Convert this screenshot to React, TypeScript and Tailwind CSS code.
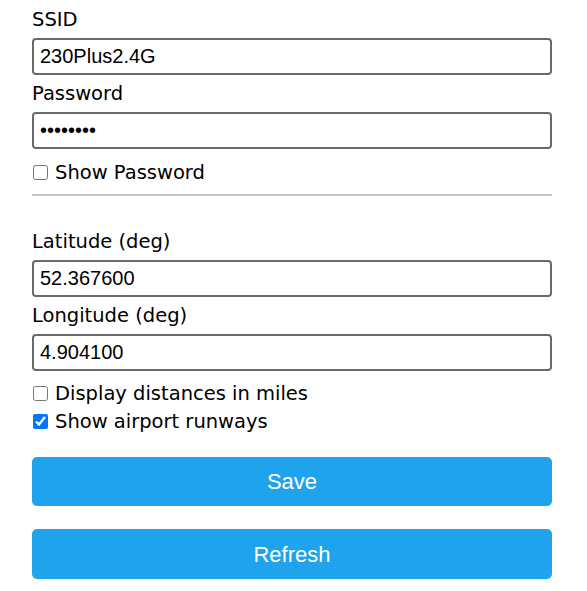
import { useState } from 'react';

const labelFont = "font-['DejaVu_Sans',Verdana,sans-serif]";

function Field({ label, value, type = 'text' }: { label: string; value: string; type?: string }) {
  return (
    <div className="flex flex-col">
      <div className={`h-[37px] flex items-center pt-[1px] text-[19.5px] text-black ${labelFont}`}>{label}</div>
      <input
        type={type}
        defaultValue={value}
        className="h-[37px] w-full rounded-[4px] border-2 border-[#6a6a6a] bg-white px-[6px] text-[20px] text-black font-['Liberation_Sans',Arial,sans-serif] outline-none"
      />
    </div>
  );
}

function Check({ label, checked }: { label: string; checked?: boolean }) {
  const [on, setOn] = useState(!!checked);
  return (
    <label className={`h-[28px] flex items-center gap-[7px] pt-[1px] text-[19.5px] text-black ${labelFont}`}>
      <input
        type="checkbox"
        checked={on}
        onChange={() => setOn(!on)}
        className="m-0 ml-[1px] h-[15px] w-[15px] accent-[#0075ff]"
      />
      {label}
    </label>
  );
}

export default function App() {
  return (
    <div className="min-h-[591px] w-[587px] bg-white pt-[1px]">
      <div className="ml-[32px] w-[520px] flex flex-col">
        <Field label="SSID" value="230Plus2.4G" />
        <Field label="Password" value="12345678" type="password" />
        <div className="mt-[9px]">
          <Check label="Show Password" />
        </div>
        <div className="mt-[8px] h-[2px] bg-[#c6c6c6]" />
        <div className="mt-[27px]">
          <Field label="Latitude (deg)" value="52.367600" />
          <Field label="Longitude (deg)" value="4.904100" />
        </div>
        <div className="mt-[8px] flex flex-col">
          <Check label="Display distances in miles" />
          <Check label="Show airport runways" checked />
        </div>
        <button className="mt-[22px] h-[49px] w-full rounded-[5px] bg-[#1fa3ec] text-[22px] text-white font-['Liberation_Sans',Arial,sans-serif]">
          Save
        </button>
        <button className="mt-[23px] h-[50px] w-full rounded-[5px] bg-[#1fa3ec] text-[22px] text-white font-['Liberation_Sans',Arial,sans-serif]">
          Refresh
        </button>
      </div>
    </div>
  );
}
